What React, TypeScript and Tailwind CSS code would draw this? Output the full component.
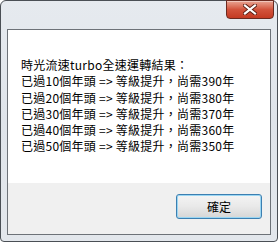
export default function App() {
  const lines = [
    "已過10個年頭 => 等級提升，尚需390年",
    "已過20個年頭 => 等級提升，尚需380年",
    "已過30個年頭 => 等級提升，尚需370年",
    "已過40個年頭 => 等級提升，尚需360年",
    "已過50個年頭 => 等級提升，尚需350年",
  ];

  return (
    <div className="w-[280px] h-[242px] bg-white font-['Noto_Sans_CJK_TC','Noto_Sans',sans-serif]">
      {/* window frame */}
      <div className="relative flex h-[242px] w-[278px] flex-col rounded-t-[6px] rounded-b-[4px] border border-[#4a4f55] bg-gradient-to-b from-[#e6eaef] via-[#dfe4ea] to-[#e3e7ec] px-[6px] pt-[28px] pb-[6px]">
        {/* close button */}
        <div className="absolute right-[3px] top-[-1px] flex h-[19px] w-[48px] items-center justify-center rounded-b-[4px] border border-[#6b2a20] bg-gradient-to-b from-[#e8a493] via-[#d2533c] to-[#c43a22] shadow-[inset_0_1px_0_rgba(255,255,255,0.4)]">
          <svg width="14" height="11" viewBox="0 0 14 11">
            <path d="M2 1.5 L12 9.5 M12 1.5 L2 9.5" stroke="#5a1e14" strokeWidth="4" strokeLinecap="square" />
            <path d="M2 1.5 L12 9.5 M12 1.5 L2 9.5" stroke="#ffffff" strokeWidth="2.2" strokeLinecap="square" />
          </svg>
        </div>

        {/* client area */}
        <div className="flex flex-1 flex-col border border-[#6d7278] bg-white">
          <div className="flex h-[153px] flex-col bg-white pl-[13px] pt-[27px] text-[12px] leading-[16.3px] tracking-[0.25px] text-black">
            <div>時光流速turbo全速運轉結果：</div>
            {lines.map((l) => (
              <div key={l}>{l}</div>
            ))}
          </div>
          <div className="flex flex-1 items-start justify-end bg-[#f0f0f0] pr-[8px] pt-[11px]">
            <div className="flex h-[25px] w-[86px] items-center justify-center rounded-[3px] border border-[#3c7fb1] bg-gradient-to-b from-[#f4f4f4] via-[#e9e9e9] to-[#d6d6d6] shadow-[inset_0_0_0_1px_#9ad6f3]">
              <span className="text-[12px] text-black">確定</span>
            </div>
          </div>
        </div>
      </div>
    </div>
  );
}
